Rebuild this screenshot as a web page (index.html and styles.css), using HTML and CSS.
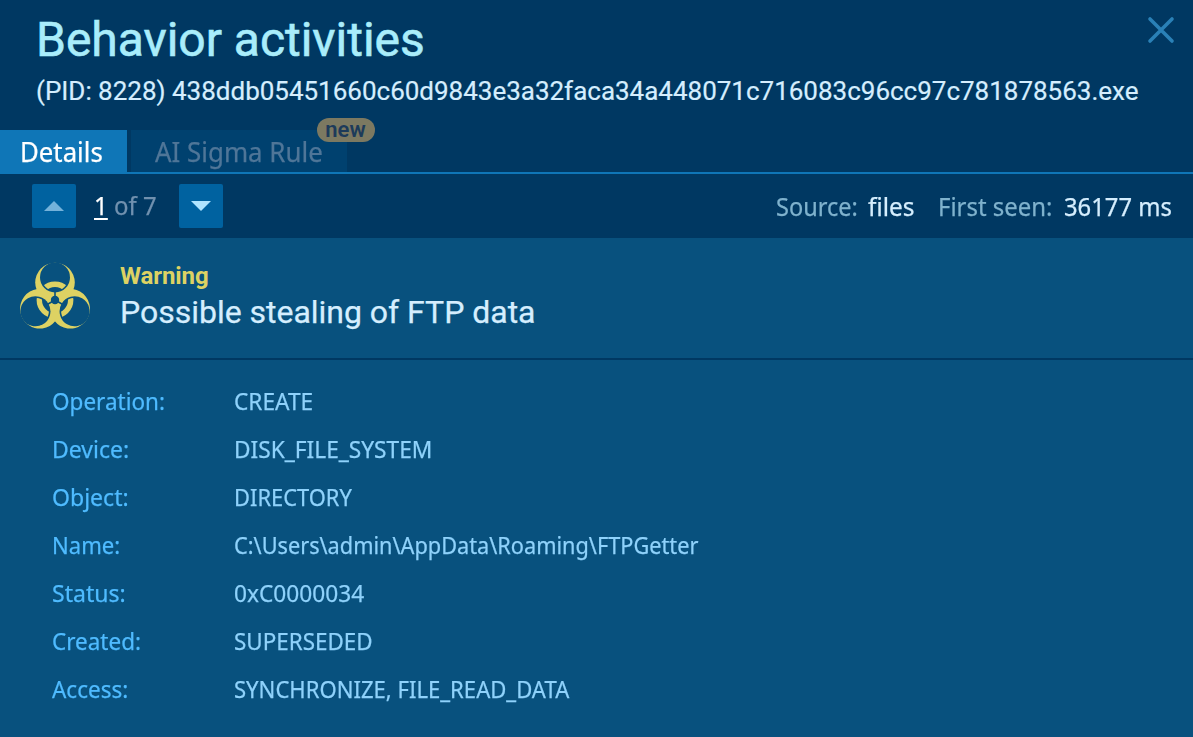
FILE: index.html
```html
<!DOCTYPE html>
<html lang="en">
<head>
<meta charset="utf-8">
<title>Behavior activities</title>
<link rel="stylesheet" href="styles.css">
</head>
<body>
<header class="header">
  <div class="heading">
    <h1 class="title">Behavior activities</h1>
    <p class="process">(PID: 8228) 438ddb05451660c60d9843e3a32faca34a448071c716083c96cc97c781878563.exe</p>
  </div>
  <svg class="close" viewBox="0 0 30 30"><path d="M4 4 26 26M26 4 4 26"/></svg>
</header>
<nav class="tabs">
  <a class="tab tab-active"><span class="narrow">Details</span></a>
  <a class="tab tab-muted"><span class="narrow">AI Sigma Rule</span><span class="badge">new</span></a>
</nav>
<div class="toolbar">
  <button class="step"><svg class="arrow arrow-dim" viewBox="0 0 20 10"><path d="M0 10 10 0 20 10z"/></svg></button>
  <div class="counter"><span class="narrow current">1</span><span class="narrow total">of 7</span></div>
  <button class="step"><svg class="arrow" viewBox="0 0 20 10"><path d="M0 0H20L10 10z"/></svg></button>
  <dl class="meta">
    <dt class="source-label"><span class="narrow">Source:</span></dt>
    <dd class="source-value"><span class="narrow">files</span></dd>
    <dt class="seen-label"><span class="narrow">First seen:</span></dt>
    <dd class="seen-value"><span class="narrow">36177 ms</span></dd>
  </dl>
</div>
<section class="alert">
  <svg class="biohazard" viewBox="-36 -40 72 72">
    <defs>
      <mask id="horns" maskUnits="userSpaceOnUse" x="-40" y="-42" width="80" height="80">
        <g fill="#fff"><circle cy="-17.5" r="19.8"/><circle cy="-17.5" r="19.8" transform="rotate(120)"/><circle cy="-17.5" r="19.8" transform="rotate(240)"/></g>
        <g fill="#000">
          <circle cy="-22.6" r="15"/><circle cy="-22.6" r="15" transform="rotate(120)"/><circle cy="-22.6" r="15" transform="rotate(240)"/>
          <circle r="4.2"/>
          <path id="slit" d="M-.8-9H.8V0H-.8z"/><use href="#slit" transform="rotate(120)"/><use href="#slit" transform="rotate(240)"/>
        </g>
      </mask>
      <mask id="arcs" maskUnits="userSpaceOnUse" x="-40" y="-42" width="80" height="80">
        <g fill="#fff"><circle cy="-22.6" r="13.4"/><circle cy="-22.6" r="13.4" transform="rotate(120)"/><circle cy="-22.6" r="13.4" transform="rotate(240)"/></g>
      </mask>
    </defs>
    <rect x="-40" y="-42" width="80" height="80" mask="url(#horns)"/>
    <g mask="url(#arcs)"><circle class="ring" r="15.7"/></g>
  </svg>
  <div>
    <div class="severity">Warning</div>
    <div class="summary">Possible stealing of FTP data</div>
  </div>
</section>
<dl class="details">
  <dt><span class="narrow">Operation:</span></dt><dd><span class="narrow">CREATE</span></dd>
  <dt><span class="narrow">Device:</span></dt><dd><span class="narrow">DISK_FILE_SYSTEM</span></dd>
  <dt><span class="narrow">Object:</span></dt><dd><span class="narrow">DIRECTORY</span></dd>
  <dt><span class="narrow">Name:</span></dt><dd><span class="narrow">C:\Users\admin\AppData\Roaming\FTPGetter</span></dd>
  <dt><span class="narrow">Status:</span></dt><dd><span class="narrow">0xC0000034</span></dd>
  <dt><span class="narrow">Created:</span></dt><dd><span class="narrow">SUPERSEDED</span></dd>
  <dt><span class="narrow">Access:</span></dt><dd><span class="narrow">SYNCHRONIZE, FILE_READ_DATA</span></dd>
</dl>
</body>
</html>
```
FILE: styles.css
```css
* { box-sizing: border-box; margin: 0; padding: 0; }
body { width: 1193px; height: 737px; overflow: hidden; background: #08517e; color: #d5eefe; font-family: "Noto Sans", sans-serif; }
.narrow { display: inline-block; white-space: nowrap; transform: scaleX(var(--fit, .93)); transform-origin: 0 50%; -webkit-text-stroke: .25px; }

.header { height: 130px; padding: 12px 17px 0 36px; display: flex; justify-content: space-between; background: #003862; font-family: Roboto, sans-serif; }
.title { font-size: 48px; line-height: 56px; font-weight: 400; letter-spacing: -.02px; color: #a9edfb; -webkit-text-stroke: .6px; }
.process { font-size: 26px; line-height: 30px; margin-top: 8px; white-space: nowrap; letter-spacing: -.01px; -webkit-text-stroke: .2px; }
.close { width: 30px; height: 30px; margin-top: 3px; fill: none; stroke: #2a81b7; stroke-width: 3.6; stroke-linecap: round; flex: none; }

.tabs { height: 44px; display: flex; gap: 4px; background: #003862; border-bottom: 2px solid #0f76b7; }
.tab { height: 42px; position: relative; font-size: 28px; line-height: 43px; padding-left: 20px; white-space: nowrap; }
.tab-active { --fit: .92; width: 127px; background: #0f76b7; color: #fff; }
.tab-muted { --fit: .925; width: 216px; padding-left: 24px; background: #00416f; color: #4f7698; }
.badge { position: absolute; left: 186px; top: -12px; width: 58px; height: 24px; padding-right: 1px; border-radius: 12px; background: #7c7961; color: #1d3b5a; font: 600 22px/24px Roboto, sans-serif; text-align: center; }

.toolbar { height: 64px; background: #003862; display: flex; align-items: center; padding: 0 21px 0 32px; font-size: 26px; line-height: 36px; }
.step { width: 44px; height: 44px; border: 0; border-radius: 2px; background: #0062a0; display: grid; place-items: center; }
.arrow { width: 20px; height: 10px; fill: #afe4ff; }
.arrow-dim { fill: #74b2da; }
.counter { width: 103px; padding: 0 0 3px 18px; display: flex; color: #7191af; }
.current { width: 15px; margin-right: 5px; color: #fff; text-decoration: underline 2px; text-underline-offset: 3px; }
.total { --fit: .92; }
.meta { margin-left: auto; padding-bottom: 1px; display: flex; color: #7fb2cd; }
.meta dd { color: #d5eefe; }
.source-label { --fit: .905; width: 92px; }
.source-value { --fit: .94; width: 70px; }
.seen-label { --fit: .92; width: 126px; }
.seen-value { --fit: .915; width: 108px; }

.alert { height: 122px; border-bottom: 2px solid #003862; display: flex; padding: 22px 0 0 19px; gap: 29px; }
.biohazard { width: 72px; height: 72px; fill: #ddd263; }
.ring { fill: none; stroke: #ddd263; stroke-width: 5.4; }
.severity { font: 700 24px/32px Roboto, sans-serif; letter-spacing: -.1px; color: #ddd263; }
.summary { font: 400 32px/40px Roboto, sans-serif; letter-spacing: -.02px; -webkit-text-stroke: .25px; }

.details { padding: 17px 52px; display: grid; grid-template-columns: 182px 1fr; grid-auto-rows: 48px; line-height: 48px; font-size: 24px; color: #8fd2fb; }
.details dt { --fit: .937; color: #4fbbff; }
.details dt:nth-of-type(2), .details dt:nth-of-type(3), .details dt:nth-of-type(5) { --fit: .96; }
.details dt:nth-of-type(4) { --fit: .92; }
.details dd { --fit: .945; }
.details dd:nth-of-type(3) { --fit: .912; }
.details dd:nth-of-type(4) { --fit: .905; }
.details dd:nth-of-type(6) { --fit: .934; }
.details dd:nth-of-type(7) { --fit: .92; }
```
